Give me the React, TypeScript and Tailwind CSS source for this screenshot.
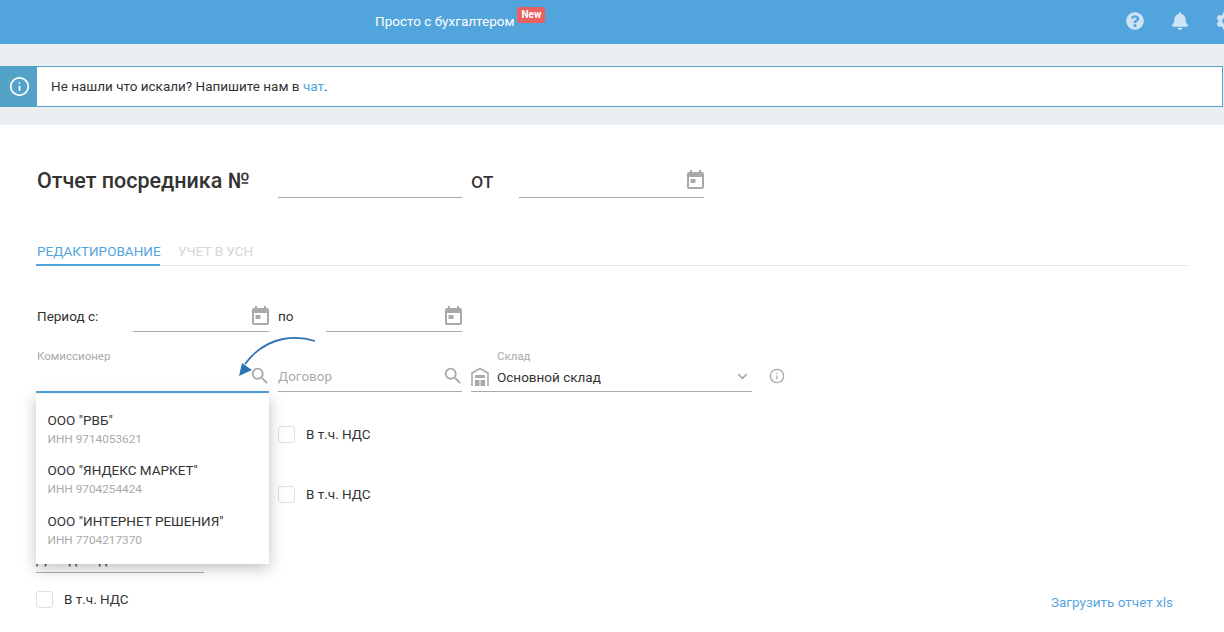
import React from 'react';
import { FaBell, FaCog, FaQuestionCircle } from 'react-icons/fa';
import { MdSearch } from 'react-icons/md';
import { ChevronDown, Info } from 'lucide-react';

const CalendarIcon: React.FC = () => (
  <svg width="17" height="19" viewBox="0 0 17 19" className="shrink-0 text-[#a9a9a9]">
    <path fill="currentColor" d="M3 0h2v2h7V0h2v2h1a2 2 0 0 1 2 2v13a2 2 0 0 1-2 2H2a2 2 0 0 1-2-2V4a2 2 0 0 1 2-2h1z" />
    <rect x="2" y="7" width="13" height="10" fill="#fff" />
    <rect x="3.5" y="9" width="5" height="4" fill="currentColor" />
  </svg>
);

const WarehouseIcon: React.FC = () => (
  <svg width="18" height="20" viewBox="0 0 18 20" className="shrink-0 text-[#a9a9a9]">
    <path fill="none" stroke="currentColor" strokeWidth="1.6" d="M1 19V6l8-4.5L17 6v13" />
    <rect x="4" y="8" width="10" height="3" fill="currentColor" />
    <rect x="4" y="13" width="4.5" height="6" fill="currentColor" />
    <rect x="9.5" y="13" width="4.5" height="6" fill="currentColor" />
  </svg>
);

const DateField: React.FC<{ className: string }> = ({ className }) => (
  <div className={`flex items-center justify-end border-b border-[#aaaaaa] ${className}`}>
    <CalendarIcon />
  </div>
);

const VatCheckbox: React.FC = () => (
  <label className="flex items-center gap-[11px] text-[13.5px] leading-5 text-[#333333]">
    <span className="h-[17px] w-[17px] rounded-[3px] border border-[#e0e0e0] bg-white" />
    В т.ч. НДС
  </label>
);

const contractors = [
  { name: 'ООО "РВБ"', inn: 'ИНН 9714053621' },
  { name: 'ООО "ЯНДЕКС МАРКЕТ"', inn: 'ИНН 9704254424' },
  { name: 'ООО "ИНТЕРНЕТ РЕШЕНИЯ"', inn: 'ИНН 7704217370' },
];

export default function App() {
  return (
    <div className="relative h-[632px] w-[1224px] overflow-hidden bg-white font-['Roboto',sans-serif] text-[#333333]">
      {/* Header */}
      <header className="relative flex h-11 items-center bg-[#52a5dc] text-white">
        <div className="ml-[375px] flex items-start">
          <span className="-mt-[2px] text-[13.5px] leading-5">Просто с бухгалтером</span>
          <span className="ml-[3px] -mt-[6px] rounded-[3px] bg-[#ea6060] px-[4px] text-[10px] font-bold leading-[16px]">New</span>
        </div>
        <div className="absolute left-[1126px] top-[12px] flex items-center gap-[27px] text-[#cde4f6]">
          <FaQuestionCircle size={18} />
          <FaBell size={18} />
          <FaCog size={18} />
        </div>
      </header>

      {/* Notice */}
      <div className="bg-[#ebeff2] pb-[18px] pt-[22px]">
        <div className="flex h-[41px] w-[1223px] border border-[#52a3c7] bg-white">
          <div className="flex w-9 items-center justify-center bg-[#52a3c7] pb-px text-white">
            <Info size={21} strokeWidth={2} />
          </div>
          <p className="mb-px ml-[14px] self-center text-[13.5px]">
            Не нашли что искали? Напишите нам в <span className="text-[#52a5dc]">чат</span>.
          </p>
        </div>
      </div>

      <main className="px-9">
        {/* Title */}
        <div className="mt-[37px] flex h-9 items-center pt-[2px]">
          <h1 className="ml-px w-[241px] whitespace-nowrap text-[21.5px] font-medium text-[#333333]">Отчет посредника №</h1>
          <div className="h-9 w-[184px] self-end border-b border-[#aaaaaa]" />
          <span className="ml-[9px] w-[48px] text-[21.5px]">от</span>
          <DateField className="h-9 w-[185px] self-end" />
        </div>

        {/* Tabs */}
        <div className="mt-[42px] flex h-[26px] w-[1151px] items-start gap-[18px] border-b border-[#e2e2e2] text-[13.5px] uppercase">
          <div className="h-[26px] w-[124px] whitespace-nowrap border-b-2 border-[#52a5dc] pl-px pt-px text-[#52a5dc]">Редактирование</div>
          <div className="whitespace-nowrap pt-px text-[#d6d6d6]">Учет в УСН</div>
        </div>

        {/* Period */}
        <div className="mt-[34px] flex h-8 items-center">
          <span className="ml-px w-[96px] text-[13.5px]">Период с:</span>
          <DateField className="h-8 w-[136px]" />
          <span className="ml-[9px] w-[48px] text-[13.5px]">по</span>
          <DateField className="h-8 w-[136px]" />
        </div>

        {/* Filters */}
        <div className="mt-2 flex h-[53px] items-end">
          <div className="flex h-[53px] w-[233px] flex-col justify-between border-b-2 border-[#52a5dc]">
            <span className="ml-px mt-[9px] text-[11.5px] leading-[14px] text-[#aaaaaa]">Комиссионер</span>
            <div className="-mr-[2px] mb-[4px] flex justify-end">
              <MdSearch size={22} className="text-[#aaaaaa]" />
            </div>
          </div>
          <div className="mb-px ml-[9px] flex h-[33px] w-[184px] items-center justify-between border-b border-[#aaaaaa] pt-[2px]">
            <span className="text-[13.5px] text-[#aaaaaa]">Договор</span>
            <MdSearch size={22} className="-mr-[2px] text-[#aaaaaa]" />
          </div>
          <div className="mb-px ml-[9px] flex h-[53px] w-[281px] items-end border-b border-[#aaaaaa]">
            <div className="mb-[4px]"><WarehouseIcon /></div>
            <div className="ml-[8px] flex-1">
              <div className="mb-[4px] text-[11.5px] leading-[14px] text-[#aaaaaa]">Склад</div>
              <div className="mb-[4px] flex items-center justify-between pr-[2px] text-[13.5px] leading-5">
                Основной склад
                <ChevronDown size={15} strokeWidth={2.5} className="-mt-[2px] text-[#aaaaaa]" />
              </div>
            </div>
          </div>
          <Info size={16} className="mb-[9px] ml-[17px] text-[#a9a9a9]" />
        </div>

        {/* Lower form */}
        <div className="relative flex h-[240px]">
          <div className="w-[233px]">
            <div className="w-[168px] whitespace-nowrap border-b border-[#aaaaaa] pb-[3px] pt-[156px] text-sm leading-5 text-[#333333]">Доход от дел</div>
            <div className="mt-4"><VatCheckbox /></div>
          </div>
          <div className="ml-[9px] flex flex-col gap-10 pt-[31px]">
            <VatCheckbox />
            <VatCheckbox />
          </div>
          <a className="absolute left-[1015px] top-[199px] text-[13.5px] text-[#5aa5e0]">Загрузить отчет xls</a>

          {/* Dropdown */}
          <div className="absolute left-0 top-[1px] h-[170px] w-[233px] bg-white pl-[11.5px] pr-3 pt-4 shadow-[0_4px_14px_rgba(0,0,0,0.25)]">
            {contractors.map(c => (
              <div key={c.inn} className="h-[50.4px]">
                <div className="text-[13.5px] leading-5 text-[#333333]">{c.name}</div>
                <div className="-mt-px text-[11.8px] leading-5 text-[#aaaaaa]">{c.inn}</div>
              </div>
            ))}
          </div>
        </div>
      </main>

      {/* Annotation arrow over the screenshot */}
      <svg className="absolute left-[230px] top-[330px]" width="95" height="55" viewBox="0 0 95 55" fill="none">
        <path d="M85 11C70 6 38 3 15 34" stroke="#2f75b5" strokeWidth="1.8" />
        <path d="M9 46L12 33L22 40Z" fill="#2f75b5" />
      </svg>
    </div>
  );
}
